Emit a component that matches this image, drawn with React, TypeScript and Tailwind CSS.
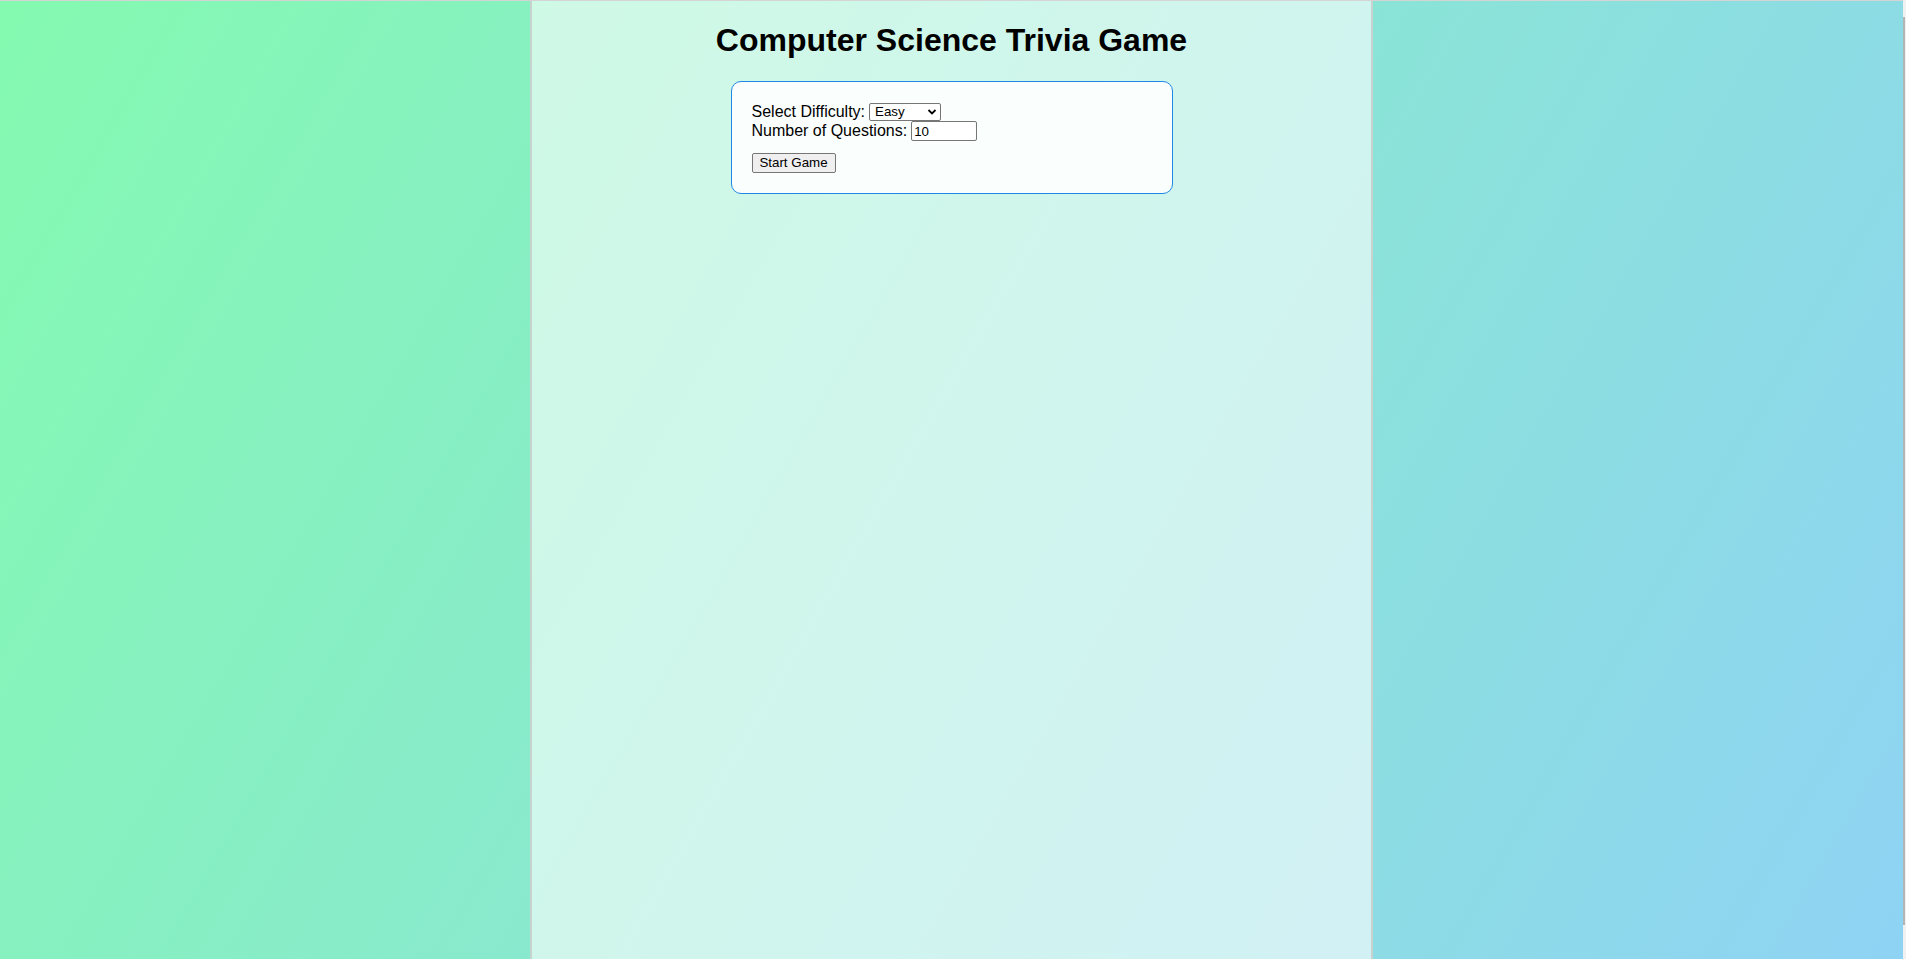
import React, { useState } from "react";

const TriviaSetup: React.FC = () => {
  const [difficulty, setDifficulty] = useState("easy");
  const [count, setCount] = useState("10");

  return (
    <div className="w-[442px] mx-auto rounded-[10px] border border-[#1e88e5] bg-white/90 p-[20px] text-[16px] leading-[18px] text-black">
      <div className="flex items-center gap-[4px] h-[19px]">
        <label htmlFor="difficulty">Select Difficulty:</label>
        <span className="relative inline-block">
          <select
            id="difficulty"
            value={difficulty}
            onChange={(e) => setDifficulty(e.target.value)}
            className="block appearance-none w-[72px] h-[18px] border border-[#767676] rounded-[2px] bg-white pl-[5px] text-[13.33px] leading-[16px] text-black outline-none"
          >
            <option value="easy">Easy</option>
            <option value="medium">Medium</option>
            <option value="hard">Hard</option>
          </select>
          <svg
            className="pointer-events-none absolute right-[4px] top-[5px]"
            width="10"
            height="8"
            viewBox="0 0 10 8"
          >
            <path d="M1.5 2 L5 5.5 L8.5 2" fill="none" stroke="#000" strokeWidth="1.8" />
          </svg>
        </span>
      </div>
      <div className="flex items-center gap-[4px] h-[20px]">
        <label htmlFor="count">Number of Questions:</label>
        <input
          id="count"
          type="number"
          value={count}
          onChange={(e) => setCount(e.target.value)}
          className="block w-[66px] h-[20px] border border-[#767676] rounded-[2px] bg-white px-[2px] text-[13.33px] text-black outline-none [appearance:textfield] [&::-webkit-inner-spin-button]:appearance-none [&::-webkit-outer-spin-button]:appearance-none"
        />
      </div>
      <div className="mt-[12px] h-[20px]">
        <button
          type="button"
          className="block h-[20px] w-[84px] border border-[#767676] rounded-[2px] bg-[#efefef] text-[13.33px] leading-[16px] text-black"
        >
          Start Game
        </button>
      </div>
    </div>
  );
};

export default function App() {
  return (
    <div className="flex h-screen w-full overflow-hidden font-['Liberation_Sans',Arial,sans-serif]">
      <div className="flex-1 flex flex-col bg-[linear-gradient(120deg,#84fab0_0%,#8fd3f4_100%)]">
        <div className="h-px bg-[#d4d4d4]" />
        <div className="flex-1 w-[843px] mx-auto border-x-2 border-[#c8d2ce] bg-white/60">
          <h1 className="mt-[21px] mb-[22px] text-center text-[32px] leading-[37px] font-bold text-black">
            Computer Science Trivia Game
          </h1>
          <TriviaSetup />
        </div>
      </div>
      <div className="w-[3px] flex flex-col bg-[#f1f1f1]">
        <div className="h-[17px]" />
        <div className="h-[908px] w-[2px] bg-[#b4b4b4]" />
      </div>
    </div>
  );
}
